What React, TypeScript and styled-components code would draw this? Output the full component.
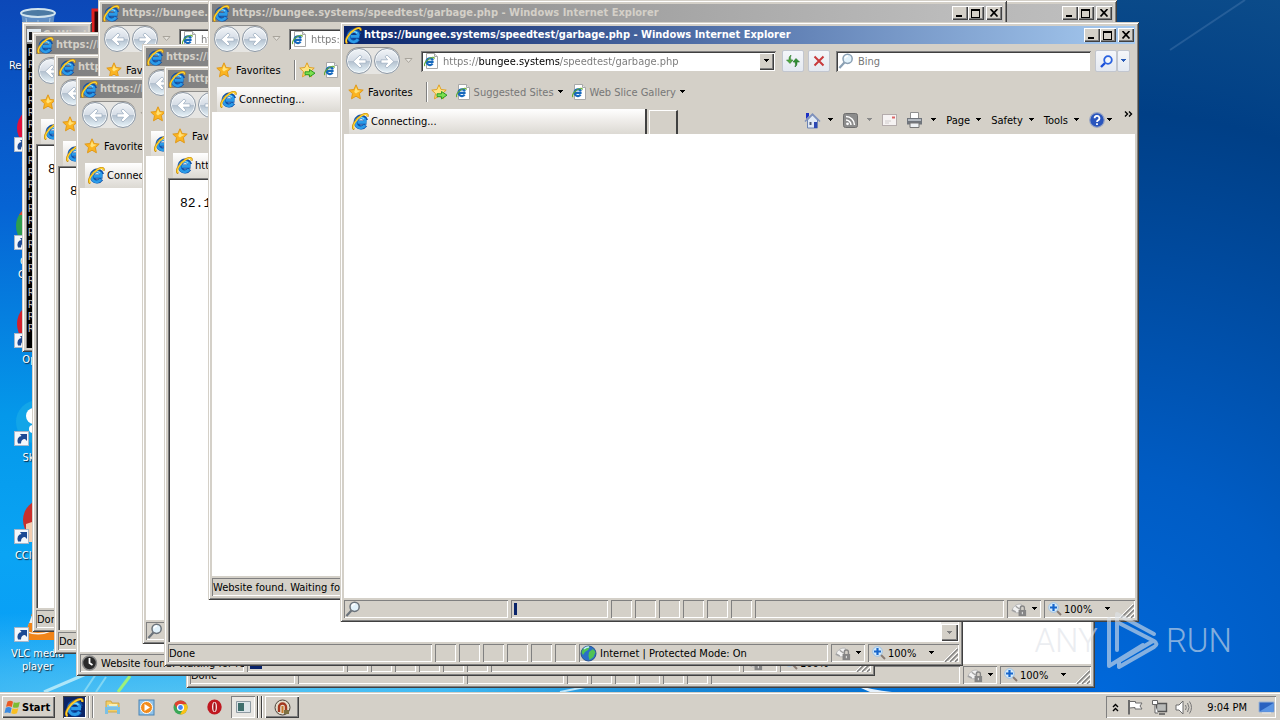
import React from "react";
import styled, { createGlobalStyle, css } from "styled-components";

const face = "#d4d0c8";
const ui = `"DejaVu Sans Condensed", "DejaVu Sans", sans-serif`;

const GlobalStyle = createGlobalStyle`
  *, *::before, *::after { box-sizing: border-box; }
  body { margin: 0; font: 11px/13px ${ui}; color: #000; background: #0860c8; }
  button, input { font: inherit; color: inherit; margin: 0; padding: 0; border: 0; background: none; border-radius: 0; }
  a { color: inherit; text-decoration: none; }
  svg { display: block; flex: none; }
`;

const raised = css`
  background: ${face};
  box-shadow: inset 1px 1px #fff, inset -1px -1px #404040, inset -2px -2px #808080;
`;
const sunken = css`
  box-shadow: inset 1px 1px #808080, inset -1px -1px #fff;
`;

/* ---------- page ---------- */

const Screen = styled.div`
  position: relative;
  min-height: 100vh;
  display: flex;
  flex-direction: column;
  overflow: hidden;
`;

const Desktop = styled.main`
  position: relative;
  flex: 1;
  min-height: 692px;
  overflow: hidden;
  background:
    radial-gradient(ellipse 60% 14% at 18% 102%, rgba(120, 215, 240, 0.75), transparent),
    linear-gradient(to bottom, #0c48b8 0%, #0664d4 30%, #0498ea 60%, #0aa4f4 80%, #089cf8 100%);

  &::before {
    content: "";
    position: absolute;
    inset: 0;
    background: radial-gradient(circle at 86% 100%, #0068da 0, #005cc4 220px, #004a9e 440px, #003f86 580px, #0c4c8a 720px);
    mask-image: linear-gradient(to right, transparent 35%, #000 85%);
  }
`;

const Streaks = styled.svg`
  position: absolute;
  inset: 0;
  width: 100%;
  height: 100%;
`;

const IconGrid = styled.ul`
  position: relative;
  margin: 0;
  padding: 6px 0 0;
  list-style: none;
  display: grid;
  grid-template-rows: repeat(7, 98px);
  grid-auto-columns: 75px;
  grid-auto-flow: column;
`;

const Shortcut = styled.a`
  display: flex;
  flex-direction: column;
  align-items: center;
  gap: 5px;
  color: #fff;
  text-align: center;
  text-shadow: 1px 1px 1px #123;
`;

const ShortcutLabel = styled.span`
  width: 60px;
`;

/* ---------- window ---------- */

const Frame = styled.section<{ $x: number; $y: number; $w: number; $h: number }>`
  position: absolute;
  left: ${(p) => p.$x}px;
  top: ${(p) => p.$y}px;
  width: ${(p) => p.$w}px;
  height: ${(p) => p.$h}px;
  padding: 4px;
  display: flex;
  flex-direction: column;
  background: ${face};
  box-shadow: inset 1px 1px ${face}, inset -1px -1px #404040, inset 2px 2px #fff, inset -2px -2px #808080;
`;

const TitleBar = styled.header<{ $active?: boolean }>`
  flex: none;
  height: 18px;
  display: flex;
  align-items: center;
  gap: 2px;
  padding: 0 1px;
  color: ${(p) => (p.$active ? "#fff" : face)};
  background: ${(p) =>
    p.$active ? "linear-gradient(to right, #0a246a, #a6caf0)" : "linear-gradient(to right, #808080, #c0c0c0)"};
`;

const Title = styled.h2`
  flex: 1;
  margin: 0;
  overflow: hidden;
  white-space: nowrap;
  font-size: 11px;
  line-height: 18px;
  font-weight: bold;
`;

const CaptionGroup = styled.div`
  display: flex;
`;

const CaptionButton = styled.button`
  ${raised}
  width: 16px;
  height: 14px;
  display: grid;
  place-items: center;
`;

const NavRow = styled.div`
  flex: none;
  height: 34px;
  display: flex;
  align-items: center;
  padding: 0 5px 0 2px;
`;

const NavPair = styled.div`
  display: flex;
  gap: 2px;
  border-radius: 14px;
  background: #e6e5e2;
  box-shadow: 0 -1px #908f8c;
`;

const NavButton = styled.button`
  width: 26px;
  height: 26px;
  border: 1px solid #8c97a4;
  border-radius: 50%;
  display: grid;
  place-items: center;
  background: linear-gradient(to bottom, #f2f5f8 0%, #d6dde6 48%, #b4c1cf 52%, #e8f4fa 100%);
  box-shadow: inset 0 0 0 1px #f6f9fb;
`;

const RecentButton = styled.button`
  width: 17px;
  height: 20px;
  margin-right: 4px;
  display: grid;
  place-items: center;
`;

const Field = styled.div<{ $grow: number }>`
  flex: ${(p) => p.$grow} 1 0;
  min-width: 0;
  height: 21px;
  display: flex;
  align-items: center;
  gap: 4px;
  padding: 2px 2px 2px 2px;
  background: #fff;
  box-shadow: inset 1px 1px #808080, inset -1px -1px ${face}, inset 2px 2px #404040;
`;

const AddressInput = styled.input`
  flex: 1;
  min-width: 0;
  height: 17px;
  outline: none;
  color: #777;
  background: linear-gradient(to right, #777 36px, #000 36px 117px, #777 117px);
  background-clip: text;
  -webkit-text-fill-color: transparent;
`;

const SearchInput = styled.input`
  flex: 1;
  min-width: 0;
  height: 17px;
  outline: none;
  &::placeholder { color: #777; opacity: 1; }
`;

const DropButton = styled.button`
  ${raised}
  width: 15px;
  height: 17px;
  display: grid;
  place-items: center;
`;

const ToolButton = styled.button<{ $w?: number }>`
  flex: none;
  width: ${(p) => p.$w ?? 22}px;
  height: 22px;
  display: grid;
  place-items: center;
  background: linear-gradient(to bottom, #f4f6fa, #e4e9f1);
  border: 1px solid #c2c6cf;
  border-radius: 2px;
`;

const ToolCluster = styled.div<{ $gap?: number }>`
  display: flex;
  flex: none;
  gap: ${(p) => p.$gap ?? 0}px;
  margin: 0 6px;
  &:last-child { margin: 0 0 0 4px; }
`;

const FavRow = styled.div`
  flex: none;
  height: 28px;
  display: flex;
  align-items: center;
  gap: 7px;
  padding: 0 4px;
  white-space: nowrap;
`;

const FavButton = styled.button`
  display: flex;
  align-items: center;
  gap: 3px;
`;

const FavLink = styled.a`
  display: flex;
  align-items: center;
  gap: 3px;
  color: #777;
`;

const Divider = styled.i`
  width: 2px;
  height: 20px;
  margin: 0 -4px 0 6px;
  background: #808080;
  border-right: 1px solid #fff;
`;

const TabRow = styled.div`
  flex: none;
  height: 28px;
  display: flex;
  align-items: flex-end;
  gap: 2px;
  padding: 0 2px 0 5px;
`;

const Tab = styled.button`
  width: 298px;
  height: 25px;
  display: flex;
  align-items: center;
  gap: 2px;
  padding-left: 3px;
  white-space: nowrap;
  background: linear-gradient(to bottom, #fff, #f1efec 40%, #dcd9d3);
  border-right: 2px solid #404040;
`;

const NewTab = styled.button`
  width: 29px;
  height: 24px;
  border: 1px solid #fff;
  border-bottom: 0;
  border-right: 2px solid #404040;
`;

const CommandBar = styled.div`
  flex: 1;
  height: 28px;
  display: flex;
  justify-content: flex-end;
  align-items: center;
  gap: 9px;
`;

const Command = styled.button<{ $gap?: number }>`
  display: flex;
  align-items: center;
  gap: ${(p) => p.$gap ?? 5}px;
`;

const Chevron = styled.button`
  height: 26px;
  padding: 0 0 0 2px;
  display: flex;
`;

const Page = styled.div<{ $inset?: boolean }>`
  flex: 1;
  min-height: 0;
  display: flex;
  justify-content: space-between;
  background: #fff;
  ${(p) => p.$inset && css`padding: 2px 1px 1px 2px; box-shadow: inset 1px 1px #808080, inset 2px 2px #404040, inset -1px -1px #fff;`}
`;

const PageText = styled.pre`
  margin: 16px 10px;
  font: 13px/16px "Liberation Mono", monospace;
`;

const ScrollTrack = styled.div`
  width: 17px;
  display: flex;
  flex-direction: column;
  justify-content: flex-end;
  background: #eae8e4;
`;

const ScrollButton = styled.button`
  ${raised}
  height: 17px;
  display: grid;
  place-items: center;
`;

const StatusBar = styled.footer`
  flex: none;
  height: 20px;
  padding-top: 2px;
  display: flex;
  gap: 3px;
  white-space: nowrap;
`;

const Cell = styled.div<{ $w?: number }>`
  ${sunken}
  flex: ${(p) => (p.$w ? `0 0 ${p.$w}px` : "1 1 0")};
  min-width: 0;
  height: 18px;
  overflow: hidden;
  display: flex;
  align-items: center;
  gap: 3px;
  padding: 0 1px;
`;

const Progress = styled.i<{ $w: number }>`
  width: ${(p) => p.$w}px;
  height: 12px;
  margin-left: 2px;
  background: #0a246a;
`;

const StatusButton = styled.button<{ $gap: number }>`
  display: flex;
  align-items: center;
  gap: ${(p) => p.$gap}px;
  padding-left: 3px;
`;

const ZoomLevel = styled(StatusButton)`
  margin-left: 6px;
`;

const Grip = styled.svg`
  margin: 3px 0 0 auto;
`;

/* ---------- console ---------- */

const ConsoleText = styled.pre`
  flex: 1;
  margin: 0;
  padding: 3px 0 0 2px;
  overflow: hidden;
  color: #c0c0c0;
  background: #000;
  box-shadow: inset 1px 0 #808080;
  font: 10px/12px "DejaVu Sans Mono", monospace;
`;

/* ---------- taskbar ---------- */

const Taskbar = styled.nav`
  position: relative;
  flex: none;
  height: 28px;
  display: flex;
  align-items: center;
  padding: 3px 4px 1px 2px;
  background: ${face};
  box-shadow: inset 0 1px ${face}, inset 0 2px #fff;
`;

const StartButton = styled.button`
  ${raised}
  width: 53px;
  height: 22px;
  display: flex;
  align-items: center;
  gap: 1px;
  padding-left: 2px;
  margin-right: 8px;
  font-weight: bold;
`;

const TaskButton = styled.button<{ $look?: "raised" | "pressed" | "lit" }>`
  height: 22px;
  width: 34px;
  display: grid;
  place-items: center;
  ${(p) => p.$look === "raised" && raised}
  ${(p) => p.$look === "pressed" && css`width: 24px; background: #e9e7e3; box-shadow: inset 1px 1px #808080, inset -1px -1px #fff;`}
  ${(p) => p.$look === "lit" && css`width: 23px; background: #0a2466; box-shadow: inset 1px 1px #404040, inset -1px -1px #fff;`}
`;

const Stack = styled.i<{ $dark?: boolean }>`
  width: 8px;
  height: 22px;
  margin-right: ${(p) => (p.$dark ? 2 : 1)}px;
  background: repeating-linear-gradient(
    to right,
    ${face} 0 2px,
    ${(p) => (p.$dark ? "#404040" : "#808080")} 2px 3px,
    #fff 3px 4px
  );
`;

const Tray = styled.div`
  ${sunken}
  height: 22px;
  margin-left: auto;
  display: flex;
  align-items: center;
  gap: 7px;
  padding: 0 1px 0 6px;
`;

const TrayButton = styled.button`
  display: block;
`;

const Clock = styled.time`
  margin: 0 4px 0 8px;
`;

const Watermark = styled.div`
  position: absolute;
  right: 48px;
  bottom: 48px;
  display: flex;
  align-items: center;
  gap: 5px;
  color: rgba(222, 226, 232, 0.6);
  font: 300 33px/40px Roboto, sans-serif;
  pointer-events: none;
`;

/* ---------- drawings ---------- */

const Caret = ({ fill = "#000" }: { fill?: string }) => (
  <svg width="7" height="4" viewBox="0 0 7 4" shapeRendering="crispEdges">
    <path d="M0 0h6L3 3z" fill={fill} />
  </svg>
);

const IeLogo = ({ size = 17 }: { size?: number }) => (
  <svg width={size} height={size} viewBox="0 0 16 16" fill="none">
    <path d="M13.6 9H5.2M13.2 6.9A5 5 0 1 0 12.6 11.4" stroke="#0d4fa8" strokeWidth="4" />
    <path d="M13.4 8.9H5.2M12.8 8.2A4.8 4.8 0 1 0 12.2 11.6" stroke="#2b9be8" strokeWidth="2.6" />
    <path d="M4.4 7.4a4 4 0 0 1 7-1.6" stroke="#8ddaf8" strokeWidth="1" />
    <path d="M2.2 15.2C-1.4 14.4 3.2 5.6 8.8 2.4c3.8-2.2 6.6-2 5.8 1" stroke="#c98908" strokeWidth="2" />
    <path d="M2.2 14.8C-.8 14 3.4 5.8 8.8 2.6c3.6-2 6.2-2 5.6.6" stroke="#fcd535" strokeWidth="1.2" />
  </svg>
);

const PageIcon = () => (
  <svg width="16" height="16" viewBox="0 0 16 16">
    <path d="M3.5.5h8l3 3v12h-11z" fill="#fff" stroke="#a8a8a8" />
    <path d="M11.5.5v3h3" fill="#e4e4e4" stroke="#a8a8a8" />
    <g fill="none">
      <path d="M10.6 8.800H4.6M9.9 7.2a3.4 3.4 0 1 0-.3 3.5" stroke="#1668bd" strokeWidth="2.2" />
      <path d="M2 13C-.2 11.8 4.6 5 9.6 4.2c2-.2 1.8 1 1.2 1.8" stroke="#62a832" strokeWidth="1.1" />
    </g>
  </svg>
);

const Star = ({ arrow }: { arrow?: boolean }) => (
  <svg width="17" height="16" viewBox="0 0 17 16">
    <path d="M8 .8l2.100 4.700 5.100.6-3.800 3.500 1 5.200L8 12.200l-4.500 2.600 1-5.200L.8 6.100l5.100-.6z" fill={arrow ? "#fde48a" : "#fbb420"} stroke={arrow ? "#e0a020" : "#e09a1c"} />
    <path d="M8 3l1.400 3.300 3.300.5-3 1.400L8 9.600 6.200 8z" fill="#ffe27a" />
    {arrow && <path d="M6 9.800h4.500V7.500l5.500 3.700-5.500 3.700v-2.200H6z" fill="#7be04e" stroke="#2c9a24" />}
  </svg>
);

const Lens = ({ color = "#8aa0b4", size = 16 }: { color?: string; size?: number }) => (
  <svg width={size} height={size} viewBox="0 0 16 16">
    <path d="M6.4 9.4L1.4 15" stroke={color} strokeWidth="2.2" />
    <circle cx="9.6" cy="5.8" r="4.6" fill="#e2f2fb" stroke={color} strokeWidth="1.5" />
    <path d="M7 5.4a3 3 0 0 1 3-2.4" stroke="#fff" strokeWidth="1.4" fill="none" />
  </svg>
);

const GoLens = () => (
  <svg width="13" height="13" viewBox="0 0 13 13">
    <path d="M5 8L1 12" stroke="#1c4fd8" strokeWidth="2.400" />
    <circle cx="8" cy="5" r="3.800" fill="#f2f6fc" stroke="#2a62e0" strokeWidth="1.800" />
  </svg>
);

const Arrow = ({ right }: { right?: boolean }) => (
  <svg width="17" height="15" viewBox="0 0 17 15">
    <path
      d={right ? "M2 5.8h6.6L6 2.8 8 1l6.8 6.5L8 14l-2-1.8 2.6-3H2z" : "M15 5.8H8.400l2.600-3L9 1 2.200 7.500 9 14l2-1.800-2.600-3H15z"}
      fill="#fff"
      stroke="#9fb0c2"
      strokeWidth=".8"
    />
  </svg>
);

const ResizeGrip = () => (
  <Grip width="14" height="14" viewBox="0 0 14 14">
    <path d="M1 14L14 1M6 14l8-8M11 14l3-3" stroke="#808080" strokeWidth="1.4" />
    <path d="M0 13L13 0M5 13l9-9M10 13l4-4" stroke="#fff" />
  </Grip>
);

const LockIcon = () => (
  <svg width="17" height="15" viewBox="0 0 18 15">
    <path d="M1 9C2 3 8 1 11 2l-1 9H6z" fill="#f2f2f2" stroke="#b4b4b4" />
    <path d="M1 8l4 2M5 4l4 3" stroke="#a0a0a0" strokeWidth="1.5" />
    <rect x="8" y="8" width="8" height="6.500" fill="#858585" />
    <path d="M9.800 8V6a2.200 2.200 0 0 1 4.400 0v2" fill="none" stroke="#858585" strokeWidth="1.400" />
    <path d="M12 10v2.500" stroke="#eee" />
  </svg>
);

const ZoomIcon = () => (
  <svg width="14" height="14" viewBox="0 0 14 14">
    <path d="M8 8l5 5" stroke="#8a7c74" strokeWidth="2" />
    <circle cx="5.500" cy="5.500" r="4.800" fill="#d6ebfa" stroke="#9cc2e6" />
    <path d="M5.500 2v7M2 5.500h7" stroke="#1766cc" strokeWidth="2.200" />
  </svg>
);

const Globe = () => (
  <svg width="17" height="17" viewBox="0 0 17 17">
    <circle cx="8.500" cy="8.500" r="7.500" fill="#2a6fc8" stroke="#28508c" />
    <path d="M3 4c3-3 6-3 7-2L8 5 5 7 3 10 1.500 7zM9 7l4-3 2.500 3-2 5-4 3-1-4z" fill="#4fc254" />
    <path d="M4 4a6 6 0 0 1 5-2" stroke="#c4ecff" fill="none" strokeWidth="1.500" />
  </svg>
);

const ClockIcon = () => (
  <svg width="17" height="16" viewBox="0 0 16 16">
    <circle cx="8" cy="8" r="7" fill="#2a2a2a" stroke="#8a8a8a" strokeWidth="1.500" />
    <path d="M8 3v5l3 2" stroke="#fff" strokeWidth="1.800" fill="none" />
  </svg>
);

const WindowsFlag = () => (
  <svg width="17" height="17" viewBox="0 0 17 17">
    <path d="M3.500 2.500q3-1.500 5.500.3L7.800 8Q5 6.500 2 7.800z" fill="#ea5a24" />
    <path d="M9.800 3.200q3 1.300 6-.2L14.500 8.200q-3 1.300-5.800 0z" fill="#7cbc34" />
    <path d="M1.800 8.700Q5 7.400 7.600 9l-1.200 5.200Q3.500 12.800.5 14z" fill="#3a8ae0" />
    <path d="M8.500 9.200q3 1.300 5.800 0L13 14.300q-3 1.300-5.800 0z" fill="#f9bf22" />
  </svg>
);

const desktopArt: Record<string, React.ReactNode> = {
  bin: (
    <>
      <path d="M7 6l5 38q12 6 24 0l5-38z" fill="#7da6c8" opacity=".75" />
      <path d="M12 12l4 30M24 14v30M36 12l-4 30" stroke="#c6e2f2" opacity=".6" />
      <ellipse cx="24" cy="7" rx="17" ry="4" fill="#4c7aa4" stroke="#d2e4ee" strokeWidth="2" />
    </>
  ),
  firefox: <circle cx="24" cy="24" r="21" fill="#e0103c" />,
  chrome: (
    <>
      <circle cx="24" cy="24" r="22" fill="#2e9e4e" />
      <path d="M5 13a22 22 0 0 1 38 0H24z" fill="#d8432f" />
      <circle cx="24" cy="24" r="9" fill="#3f7fe8" stroke="#fff" strokeWidth="3" />
    </>
  ),
  opera: <ellipse cx="24" cy="24" rx="21" ry="22" fill="#d2202c" />,
  skype: (
    <>
      <circle cx="24" cy="24" r="22" fill="#12a5e8" />
      <circle cx="20" cy="18" r="8" fill="#fff" />
      <circle cx="19" cy="31" r="4" fill="#fff" />
    </>
  ),
  ccleaner: (
    <>
      <circle cx="30" cy="24" r="21" fill="#c9302c" />
      <path d="M12 28l12-4 4 22H12z" fill="#f3cdb0" />
    </>
  ),
  vlc: (
    <>
      <path d="M8 34h34l5 12H6z" fill="#f08418" />
      <path d="M24 4l12 34q-12 5-24 0z" fill="#f5f0ea" />
      <path d="M20 14h8l3 8H17zM15 29h18l3 8q-12 4-24 0z" fill="#f08418" />
    </>
  ),
  acrobat: <rect x="4" y="4" width="44" height="42" fill="#2a0808" stroke="#e02020" strokeWidth="3" />,
};

const DesktopIcon = ({ art, label, shortcut = true }: { art: string; label: string; shortcut?: boolean }) => (
  <li>
    <Shortcut href="#">
      <svg width="48" height="48" viewBox="0 0 48 48">
        {desktopArt[art]}
        {shortcut && (
          <>
            <rect x=".5" y="33.500" width="14" height="14" fill="#f4f7fb" stroke="#a9b6c8" />
            <path d="M4 45.500Q2 39 7.500 38L6 36h7v7l-2-2q-4 0-4 4.500z" fill="#1d4a94" />
          </>
        )}
      </svg>
      <ShortcutLabel>{label}</ShortcutLabel>
    </Shortcut>
  </li>
);

/* ---------- browser window ---------- */

const pageTitle = "https://bungee.systems/speedtest/garbage.php - Windows Internet Explorer";
const pageUrl = "https://bungee.systems/speedtest/garbage.php";

const Captions = () => (
  <>
    <CaptionGroup>
      <CaptionButton aria-label="Minimize">
        <svg width="10" height="8" shapeRendering="crispEdges"><path d="M1 6h6v2H1z" /></svg>
      </CaptionButton>
      <CaptionButton aria-label="Maximize">
        <svg width="10" height="9" shapeRendering="crispEdges"><path d="M0 0h9v9H0zM1 2v6h7V2z" fillRule="evenodd" /></svg>
      </CaptionButton>
    </CaptionGroup>
    <CaptionButton aria-label="Close">
      <svg width="9" height="8"><path d="M.5 0l7 7.500M7.500 0l-7 7.500" stroke="#000" strokeWidth="1.700" /></svg>
    </CaptionButton>
  </>
);

const Commands = () => (
  <CommandBar>
    <Command aria-label="Home" $gap={6}>
      <svg width="17" height="17" viewBox="0 0 17 17">
        <path d="M3.500 8v8h10V8l-5-5z" fill="#dfe8f5" stroke="#6c84b4" />
        <path d="M1 9.500L8.500 2 16 9.500" fill="none" stroke="#7d90bc" strokeWidth="1.500" />
        <path d="M2 1h3v3L2 7z" fill="#1b2fc4" />
        <path d="M10 10h3v6h-3z" fill="#2b47b4" />
        <path d="M5.500 10h2v3h-2z" fill="#4a5878" />
      </svg>
      <Caret />
    </Command>
    <Command aria-label="Feeds" $gap={8}>
      <svg width="15" height="15" viewBox="0 0 15 15">
        <rect x=".5" y=".5" width="14" height="14" rx="2" fill="#8c8c8c" stroke="#6e6e6e" />
        <circle cx="4.500" cy="10.800" r="1.400" fill="#fff" />
        <path d="M3 7a5 5 0 0 1 5 5M3 3.500A8.500 8.500 0 0 1 11.500 12" fill="none" stroke="#fff" strokeWidth="1.500" />
      </svg>
      <Caret fill="#8a8a8a" />
    </Command>
    <Command aria-label="Read mail">
      <svg width="15" height="12" viewBox="0 0 15 12">
        <rect x=".5" y=".5" width="14" height="11" fill="#f6f3f3" stroke="#b4acac" />
        <path d="M10 2.500h3v2h-3z" fill="#d66" />
        <path d="M3 7h6M3 9h4" stroke="#d0cccc" />
      </svg>
    </Command>
    <Command aria-label="Print" $gap={7}>
      <svg width="17" height="16" viewBox="0 0 17 16">
        <path d="M4.500.5h8v6h-8z" fill="#fff" stroke="#909090" />
        <path d="M1 6h15v6.500H1z" fill="#70757c" />
        <path d="M2 7h13v2H2z" fill="#b4bac1" />
        <path d="M4 11h9v4.500H4z" fill="#eef1f4" stroke="#777" />
      </svg>
      <Caret />
    </Command>
    <Command>Page <Caret /></Command>
    <Command>Safety <Caret /></Command>
    <Command>Tools <Caret /></Command>
    <Command aria-label="Help" $gap={1}>
      <svg width="16" height="16" viewBox="0 0 16 16">
        <circle cx="8" cy="8" r="7.300" fill="#2a55bd" stroke="#9aa6c4" strokeWidth="1.200" />
        <path d="M5.600 6.200a2.400 2.400 0 1 1 3.400 2.200q-1 .5-1 1.600M8 11.200v1.800" fill="none" stroke="#fff" strokeWidth="1.800" />
      </svg>
      <Caret />
    </Command>
    <Chevron aria-label="More commands">
      <svg width="9" height="13" viewBox="0 0 9 13"><path d="M1 4.500L3.500 7 1 9.500M5 4.500L7.500 7 5 9.500" fill="none" stroke="#000" strokeWidth="1.400" /></svg>
    </Chevron>
  </CommandBar>
);

type BrowserProps = {
  x: number;
  y: number;
  w?: number;
  h?: number;
  active?: boolean;
  loaded?: boolean;
  tab?: string;
  body?: string;
  status?: string;
  statusIcon?: React.ReactNode;
  progress?: number;
  zone?: boolean;
  split?: boolean;
};

const Browser = ({
  x, y, w = 799, h = 600, active, loaded, tab = "Connecting...", body, status, statusIcon, progress, zone, split,
}: BrowserProps) => (
  <Frame $x={x} $y={y} $w={w} $h={h} aria-label={pageTitle}>
    <TitleBar $active={active}>
      <IeLogo />
      <Title>{pageTitle}</Title>
      <Captions />
    </TitleBar>
    <NavRow>
      <NavPair>
        <NavButton aria-label="Back"><Arrow /></NavButton>
        <NavButton aria-label="Forward"><Arrow right /></NavButton>
      </NavPair>
      <RecentButton aria-label="Recent pages">
        <svg width="9" height="6" viewBox="0 0 9 6"><path d="M1 .5h7L4.500 4.500z" fill="#e6e3dd" stroke="#a8a49c" /></svg>
      </RecentButton>
      <Field $grow={355}>
        <PageIcon />
        <AddressInput aria-label="Address" defaultValue={pageUrl} />
        <DropButton aria-label="Show addresses"><Caret /></DropButton>
      </Field>
      <ToolCluster $gap={4}>
        <ToolButton aria-label="Refresh">
          <svg width="16" height="14" viewBox="0 0 16 14">
            <path d="M6 1Q3.500 2.500 4 6H1.500L5 9.500 8 6H6Q5 3.500 6 1z" fill="#4fa83c" stroke="#35803a" strokeWidth=".6" />
            <path d="M10 13q2.500-1.500 2-5h2.500L11 4.500 8 8h2q1 2.500 0 5z" fill="#2f8f34" stroke="#257428" strokeWidth=".6" />
          </svg>
        </ToolButton>
        <ToolButton aria-label="Stop">
          <svg width="12" height="12"><path d="M1.500 1.500l9 9M10.500 1.500l-9 9" stroke="#c8393c" strokeWidth="2" /></svg>
        </ToolButton>
      </ToolCluster>
      <Field $grow={254}>
        <Lens />
        <SearchInput aria-label="Search" placeholder="Bing" />
      </Field>
      <ToolCluster>
        <ToolButton aria-label="Go"><GoLens /></ToolButton>
        <ToolButton aria-label="Search options" $w={13}><Caret fill="#2a5cb8" /></ToolButton>
      </ToolCluster>
    </NavRow>
    <FavRow>
      <FavButton><Star /> Favorites</FavButton>
      <Divider />
      <FavButton aria-label="Add to Favorites Bar"><Star arrow /></FavButton>
      <FavLink href="#">
        <PageIcon />
        {active && <>Suggested Sites <Caret /></>}
      </FavLink>
      {active && <FavLink href="#"><PageIcon /> Web Slice Gallery <Caret /></FavLink>}
    </FavRow>
    <TabRow>
      <Tab><IeLogo /> {tab}</Tab>
      <NewTab aria-label="New tab" />
      {active && <Commands />}
    </TabRow>
    <Page $inset={loaded}>
      {body ? <PageText>{body}</PageText> : null}
      {loaded && (
        <ScrollTrack>
          <ScrollButton aria-label="Scroll down"><Caret fill="#808080" /></ScrollButton>
        </ScrollTrack>
      )}
    </Page>
    <StatusBar>
      <Cell>{statusIcon}{status}</Cell>
      {split && <Cell $w={166} />}
      {!zone && <Cell $w={97}>{progress ? <Progress $w={progress} /> : null}</Cell>}
      {[0, 1, 2, 3, 4, 5].map((i) => <Cell key={i} $w={21} />)}
      <Cell $w={249}>{zone && <><Globe /> Internet | Protected Mode: On</>}</Cell>
      <Cell $w={34}>
        <StatusButton $gap={3} aria-label="Protected mode"><LockIcon /><Caret /></StatusButton>
      </Cell>
      <Cell $w={91}>
        <StatusButton $gap={2}><ZoomIcon /> 100%</StatusButton>
        <ZoomLevel $gap={0} aria-label="Zoom level"><Caret /></ZoomLevel>
        <ResizeGrip />
      </Cell>
    </StatusBar>
  </Frame>
);

const Console = () => (
  <Frame $x={22} $y={22} $w={70} $h={330}>
    <TitleBar>
      <svg width="14" height="13"><path d="M0 0h14v13H0z" fill="#dfe8ee" /><path d="M2 3h10v8H2z" fill="#16181c" /></svg>
      <Title>C:\Wind</Title>
    </TitleBar>
    <ConsoleText>{Array.from({ length: 24 }, () => "R").join("\n")}</ConsoleText>
  </Frame>
);

const App = () => (
  <Screen>
    <GlobalStyle />
    <Desktop>
      <Streaks viewBox="0 0 1280 692" preserveAspectRatio="none" aria-hidden="true">
        <path d="M1170 50L1245 0" stroke="#5a86b8" strokeWidth="2" opacity=".35" />
        <path d="M44 692l42-18" stroke="#c8f2fb" strokeWidth="3" opacity=".8" />
        <path d="M84 692l12-18M96 692l10-15" stroke="#9be2f4" strokeWidth="2" opacity=".7" />
        <path d="M118 692l12-16" stroke="#9df07a" strokeWidth="3" />
        <path d="M852 684q20 6 40 8h-22z" fill="#fff" opacity=".9" />
        <path d="M560 692l25-5" stroke="#bde6fb" strokeWidth="2" />
      </Streaks>
      <IconGrid>
        <DesktopIcon art="bin" label="Recycle Bin" shortcut={false} />
        <DesktopIcon art="firefox" label="Firefox" />
        <DesktopIcon art="chrome" label="Google Chrome" />
        <DesktopIcon art="opera" label="Opera" />
        <DesktopIcon art="skype" label="Skype" />
        <DesktopIcon art="ccleaner" label="CCleaner" />
        <DesktopIcon art="vlc" label="VLC media player" />
        <DesktopIcon art="acrobat" label="" shortcut={false} />
      </IconGrid>
      <Console />
      <Browser x={186} y={88} w={909} status="Done" split />
      <Browser x={32} y={32} loaded body="82.1" status="Done" />
      <Browser x={54} y={54} loaded body="82.1" status="Done" />
      <Browser x={98} y={0} w={1019} />
      <Browser x={76} y={76} status="Website found. Waiting for re" statusIcon={<ClockIcon />} progress={12} />
      <Browser x={142} y={44} statusIcon={<Lens color="#6c747c" />} />
      <Browser x={164} y={66} loaded tab="https://bungee.systems" body="82.1" status="Done" zone />
      <Browser x={208} y={0} status="Website found. Waiting for" />
      <Browser x={340} y={22} active statusIcon={<Lens color="#6c747c" />} progress={3} />
    </Desktop>
    <Watermark>
      <span>ANY</span>
      <svg width="58" height="62" viewBox="0 0 58 62" fill="none" stroke="currentColor" strokeWidth="4" strokeLinejoin="round" strokeLinecap="round">
        <path d="M14 40V4L51 24M6 9v47L40 35M14 12l37 19q5 3 0 6L16 57V51L50 31" />
      </svg>
      <span>RUN</span>
    </Watermark>
    <Taskbar>
      <StartButton><WindowsFlag />Start</StartButton>
      <TaskButton $look="lit" aria-label="Internet Explorer"><IeLogo size={19} /></TaskButton>
      <Stack />
      <TaskButton aria-label="Windows Explorer">
        <svg width="17" height="16" viewBox="0 0 17 16">
          <path d="M2 2h5l1 2h7v9H2z" fill="#f2cf6a" stroke="#c89c34" strokeWidth=".8" />
          <path d="M3 6h11v4H3z" fill="#8fd0ee" />
          <path d="M1 8h15v7h-3v-4H4v4H1z" fill="#7cc0e4" />
          <path d="M5 5h8v2H5z" fill="#fbf0b4" />
        </svg>
      </TaskButton>
      <TaskButton aria-label="Media Player">
        <svg width="17" height="17" viewBox="0 0 17 17">
          <rect x="1" y="1" width="15" height="15" fill="#8fc3ea" stroke="#4b83b4" />
          <circle cx="8.500" cy="8.500" r="6" fill="#f28c1c" stroke="#fff" />
          <path d="M6.500 5l5.500 3.500L6.500 12z" fill="#fff" />
        </svg>
      </TaskButton>
      <TaskButton aria-label="Chrome">
        <svg width="15" height="15" viewBox="0 0 15 15">
          <circle cx="7.500" cy="7.500" r="7" fill="#3aa757" />
          <path d="M1.400 4A7 7 0 0 1 13.700 4.200H7.500L4.500 9z" fill="#e0402f" />
          <path d="M13.700 4.200A7 7 0 0 1 7 14.500l3.500-6L9 4.200z" fill="#fbc116" />
          <circle cx="7.500" cy="7.500" r="3" fill="#4285f4" stroke="#fff" strokeWidth="1.200" />
        </svg>
      </TaskButton>
      <TaskButton aria-label="Opera">
        <svg width="15" height="16" viewBox="0 0 15 16">
          <ellipse cx="7.500" cy="8" rx="7.200" ry="7.500" fill="#c01820" />
          <ellipse cx="7.500" cy="8" rx="2.400" ry="5" fill="#fff" />
          <ellipse cx="7.500" cy="8" rx="1.200" ry="4.500" fill="#a01018" />
        </svg>
      </TaskButton>
      <TaskButton $look="pressed" aria-label="Console">
        <svg width="15" height="12" viewBox="0 0 15 12">
          <path d="M.5.5h14v11H.5z" fill="#dce4e8" stroke="#8e9aa2" />
          <path d="M2 2h6v8H2z" fill="#3e6e6c" />
        </svg>
      </TaskButton>
      <Stack $dark />
      <TaskButton $look="raised" aria-label="Application">
        <svg width="17" height="17" viewBox="0 0 17 17">
          <circle cx="8.500" cy="8.500" r="7.500" fill="#e4dccc" stroke="#4c443c" />
          <path d="M5 13V8a3.500 3.500 0 0 1 7 0v5" fill="none" stroke="#a43820" strokeWidth="2.400" />
          <path d="M8.500 7v7" stroke="#c87828" strokeWidth="2" />
          <path d="M10 11h5v4h-5z" fill="#7c7040" />
        </svg>
      </TaskButton>
      <Tray>
        <TrayButton aria-label="Show hidden icons">
          <svg width="7" height="9" viewBox="0 0 7 9"><path d="M1 4l2.500-2.500L6 4M1 8l2.500-2.500L6 8" fill="none" stroke="#000" strokeWidth="1.400" /></svg>
        </TrayButton>
        <TrayButton aria-label="Action Center">
          <svg width="18" height="16" viewBox="0 0 18 16"><path d="M3.500 9V2.500h6v1.500h6.500l-2 3 2 3H9V8.500z" fill="#fff" stroke="#6c6c6c" /><path d="M3 1v14.500" stroke="#6c6c6c" strokeWidth="2" /></svg>
        </TrayButton>
        <TrayButton aria-label="Network">
          <svg width="17" height="16" viewBox="0 0 17 16"><path d="M5.500 4.500h10v8h-10zM8 15h6" fill="#b8bab8" stroke="#555" strokeWidth="1.400" /><path d="M1.500 1.500h5v4h-5zM4 6v8h3" fill="#fff" stroke="#666" /></svg>
        </TrayButton>
        <TrayButton aria-label="Volume">
          <svg width="17" height="15" viewBox="0 0 17 15"><path d="M1 5h3l4-4v13l-4-4H1z" fill="#fff" stroke="#6c6c6c" /><path d="M10.500 5q1.500 2.500 0 5M12.500 3q3 4.500 0 9M14.500 1.500q4 6 0 12" fill="none" stroke="#777" /></svg>
        </TrayButton>
        <Clock>9:04 PM</Clock>
        <TrayButton aria-label="Show desktop">
          <svg width="17" height="13" viewBox="0 0 17 13"><path d="M1 1h15v10H1z" fill="#2a62c0" stroke="#9cb4d4" /><path d="M1.500 10.500L15.500 2v9z" fill="#5c96e4" /><path d="M4 12h9" stroke="#e8e8e8" /></svg>
        </TrayButton>
      </Tray>
    </Taskbar>
  </Screen>
);

export default App;
